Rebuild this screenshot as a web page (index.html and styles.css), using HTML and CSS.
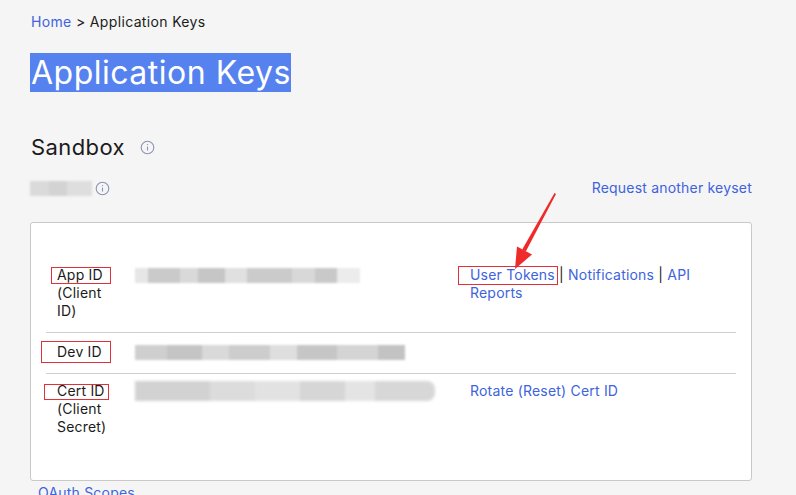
FILE: index.html
```html
<!DOCTYPE html>
<html lang="en">
<head>
<meta charset="utf-8">
<title>Application Keys</title>
<link rel="stylesheet" href="styles.css">
</head>
<body>
<div class="page">
  <nav class="crumbs"><a class="link">Home</a> &gt; Application Keys</nav>
  <h1 class="title"><span class="sel">Application Keys</span></h1>
  <h2 class="env">Sandbox
    <svg class="info" width="15" height="15" viewBox="0 0 15 15"><circle cx="7.5" cy="7.5" r="6.3" fill="none" stroke="#8a93b4" stroke-width="1.1"/><line x1="7.5" y1="6.6" x2="7.5" y2="10.6" stroke="#8a93b4" stroke-width="1.1"/><circle cx="7.5" cy="4.6" r="0.7" fill="#8a93b4"/></svg>
  </h2>
  <div class="keyset-row">
    <div class="keyset-name">
      <span class="blur blur-name"></span>
      <svg class="info" width="15" height="15" viewBox="0 0 15 15"><circle cx="7.5" cy="7.5" r="6.3" fill="none" stroke="#8a93b4" stroke-width="1.1"/><line x1="7.5" y1="6.6" x2="7.5" y2="10.6" stroke="#8a93b4" stroke-width="1.1"/><circle cx="7.5" cy="4.6" r="0.7" fill="#8a93b4"/></svg>
    </div>
    <a class="link">Request another keyset</a>
  </div>
  <div class="card">
    <table class="keys">
      <tr>
        <td class="label"><span class="mark mark-app">App ID</span> (Client ID)</td>
        <td class="value"><span class="blur blur-1"></span></td>
        <td class="actions"><span class="mark mark-tokens"><a class="link">User Tokens</a></span> | <a class="link">Notifications</a> | <a class="link">API Reports</a></td>
      </tr>
      <tr>
        <td class="label"><span class="mark mark-dev">Dev ID</span></td>
        <td class="value"><span class="blur blur-2"></span></td>
        <td class="actions"></td>
      </tr>
      <tr>
        <td class="label"><span class="mark mark-cert">Cert ID</span> (Client Secret)</td>
        <td class="value"><span class="blur blur-3"></span></td>
        <td class="actions"><a class="link">Rotate (Reset) Cert ID</a></td>
      </tr>
    </table>
  </div>
  <a class="link oauth">OAuth Scopes</a>
  <svg class="arrow" width="796" height="495" viewBox="0 0 796 495">
    <polygon points="554.5,193 556,194 525.8,251.5 522.2,249.5" fill="#ee2a2a"/>
    <polygon points="515,269 517,246.5 532,254.5" fill="#ee2a2a"/>
  </svg>
</div>
</body>
</html>
```

FILE: styles.css
```css
* { box-sizing: border-box; }
html, body { margin: 0; padding: 0; }
body {
  background: #f5f5f5;
  font-family: Inter, "Liberation Sans", Arial, sans-serif;
  color: #1b1b1b;
  font-size: 14px;
  line-height: 18px;
  letter-spacing: 0.2px;
  overflow: hidden;
}
.page {
  width: 796px;
  height: 495px;
  padding: 13px 0 0 30px;
}
.link { color: #3d63dd; text-decoration: none; cursor: pointer; }
.crumbs { font-size: 14px; line-height: 18px; padding-left: 1px; letter-spacing: 0.35px; }
.title {
  margin: 26px 0 0 0;
  font-weight: 400;
  font-size: 32px;
  line-height: 32px;
  height: 32px;
  letter-spacing: 0.5px;
}
.sel { background: #5682ef; color: #fff; padding: 0 0 0 1px; }
.env {
  margin: 44px 0 0 0;
  font-weight: 400;
  font-size: 22px;
  line-height: 28px;
  display: flex;
  align-items: center;
  gap: 15px;
  padding-left: 1px;
  letter-spacing: 0.4px;
}
.info { display: block; }
.keyset-row {
  margin-top: 17px;
  width: 722px;
  display: flex;
  justify-content: space-between;
  align-items: center;
  line-height: 20px;
}
.keyset-name { display: flex; align-items: center; gap: 3px; }
.blur { display: block; filter: blur(1.2px); }
.blur-name {
  width: 62px; height: 15px;
  background: linear-gradient(90deg, #dadada 0 30%, #d3d3d3 30% 60%, #dedede 60% 100%);
}
.card {
  margin-top: 24px;
  width: 722px;
  height: 259px;
  background: #fff;
  border: 1px solid #c9c9c9;
  border-radius: 3px;
  padding: 33px 15px 0 15px;
}
.keys { width: 690px; border-collapse: collapse; table-layout: fixed; }
.keys tr + tr td { border-top: 1px solid #cfcfcf; }
.keys td { vertical-align: top; padding: 10px 0 12px 0; }
.label { width: 89px; padding-left: 11px !important; padding-right: 22px !important; }
.value { width: 335px; }
.actions { width: 266px; color: #1b1b1b; }
.blur-1 {
  width: 225px; height: 15px; margin-top: 2px;
  background: linear-gradient(90deg, #e6e6e6 0 6%, #cacaca 6% 20%, #d9d9d9 20% 28%, #c6c6c6 28% 40%, #e0e0e0 40% 50%, #cbcbcb 50% 70%, #d8d8d8 70% 80%, #c9c9c9 80% 90%, #ececec 90% 100%);
}
.blur-2 {
  width: 270px; height: 15px; margin-top: 2px;
  background: linear-gradient(90deg, #cfcfcf 0 12%, #c4c4c4 12% 25%, #d9d9d9 25% 35%, #cdcdcd 35% 50%, #dedede 50% 60%, #c6c6c6 60% 75%, #d4d4d4 75% 90%, #c3c3c3 90% 100%);
}
.blur-3 {
  width: 300px; height: 20px; margin-top: -1px;
  border-radius: 0 8px 8px 0;
  background: linear-gradient(90deg, #d2d2d2 0 25%, #dcdcdc 25% 40%, #e2e2e2 40% 55%, #d6d6d6 55% 70%, #e4e4e4 70% 80%, #d7d7d7 80% 100%);
  filter: blur(1.8px);
}
.keys tr:last-child td { padding-top: 8px; }
.mark { position: relative; }
.mark::after {
  content: "";
  position: absolute;
  border: 1px solid #e0303a;
  pointer-events: none;
}
.mark-app::after { left: -6px; right: -8px; top: 1px; bottom: -1px; }
.mark-dev::after { left: -16px; right: -9px; top: -2px; bottom: -3px; }
.mark-cert::after { left: -13px; right: -4px; top: 2px; bottom: -1px; }
.mark-tokens::after { left: -12px; right: -3px; top: 0px; bottom: -2px; }
.oauth { display: block; margin: 3px 0 0 8px; }
.arrow { position: absolute; left: 0; top: 0; pointer-events: none; }
```
